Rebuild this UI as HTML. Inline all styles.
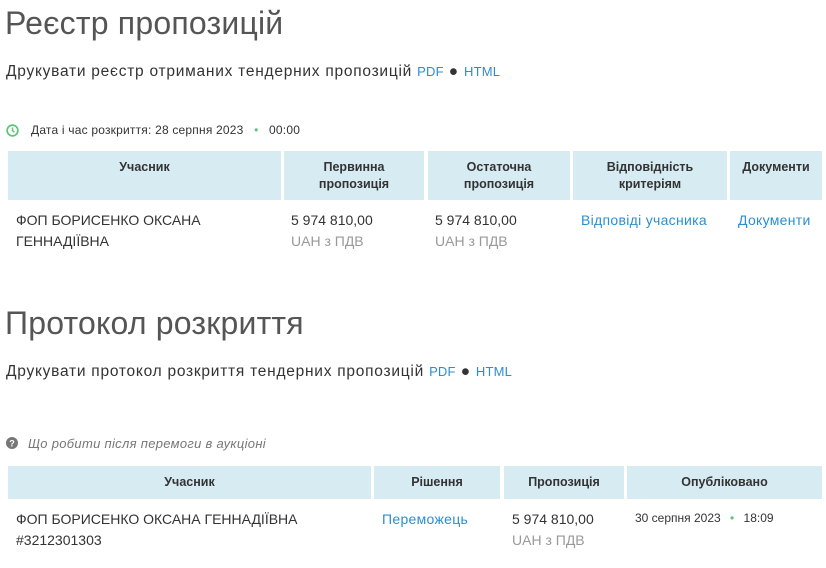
<!DOCTYPE html>
<html><head><meta charset="utf-8"><style>
body{margin:0;width:826px;height:568px;overflow:hidden;background:#fff;font-family:"Liberation Sans","DejaVu Sans",sans-serif;color:#333;}
.abs{position:absolute;}
h1{position:absolute;margin:0;font-weight:normal;font-size:32px;color:#555;left:5px;letter-spacing:0.2px}
.p{position:absolute;left:6px;font-size:15.5px;letter-spacing:0.75px;color:#333}
.p a{letter-spacing:0.2px}
a{color:#2a8fd0;text-decoration:none}
.hd{position:absolute;background:#d6ebf2;font-size:12.5px;color:#333;text-align:center;font-weight:bold;line-height:17px;box-sizing:border-box;}
.c{position:absolute;font-size:14px;line-height:21px;color:#333}
.g{color:#999}
</style></head><body>
<h1 style="top:5px">Реєстр пропозицій</h1>
<div class="p" style="top:63px">Друкувати реєстр отриманих тендерних пропозицій <a style="font-size:13px">PDF</a> ● <a style="font-size:13px">HTML</a></div>

<svg class="abs" style="left:6px;top:124px" width="13" height="13" viewBox="0 0 14 14"><circle cx="7" cy="7" r="5.8" fill="none" stroke="#5cc576" stroke-width="1.8"/><path d="M7 3.8V7l2 1.8" fill="none" stroke="#5cc576" stroke-width="1.6"/></svg>
<div class="c" style="left:31px;top:120px;font-size:12px;letter-spacing:0.2px">Дата і час розкриття: 28 серпня 2023 <span style="color:#5cc576;margin:0 7px">•</span> 00:00</div>

<div class="hd" style="left:8px;top:151px;width:273px;height:49px;padding-top:8px">Учасник</div>
<div class="hd" style="left:284px;top:151px;width:140px;height:49px;padding-top:8px">Первинна<br>пропозиція</div>
<div class="hd" style="left:428px;top:151px;width:142px;height:49px;padding-top:8px">Остаточна<br>пропозиція</div>
<div class="hd" style="left:573px;top:151px;width:154px;height:49px;padding-top:8px">Відповідність<br>критеріям</div>
<div class="hd" style="left:730px;top:151px;width:92px;height:49px;padding-top:8px">Документи</div>
<div class="c" style="left:16px;top:210px">ФОП БОРИСЕНКО ОКСАНА<br>ГЕННАДІЇВНА</div>
<div class="c" style="left:291px;top:210px">5 974 810,00<br><span class="g">UAH з ПДВ</span></div>
<div class="c" style="left:435px;top:210px">5 974 810,00<br><span class="g">UAH з ПДВ</span></div>
<div class="c" style="left:581px;top:210px;letter-spacing:0.3px"><a>Відповіді учасника</a></div>
<div class="c" style="left:738px;top:210px;letter-spacing:0.3px"><a>Документи</a></div>

<h1 style="top:305px">Протокол розкриття</h1>
<div class="p" style="top:363px">Друкувати протокол розкриття тендерних пропозицій <a style="font-size:13px">PDF</a> ● <a style="font-size:13px">HTML</a></div>

<svg class="abs" style="left:6px;top:437px" width="12" height="12" viewBox="0 0 12 12"><circle cx="6" cy="6" r="6" fill="#777"/><text x="6" y="9.5" font-size="9" font-weight="bold" fill="#fff" text-anchor="middle" font-family="Liberation Sans">?</text></svg>
<div class="c" style="left:28px;top:433px;font-size:13px;font-style:italic;color:#777;letter-spacing:0.3px">Що робити після перемоги в аукціоні</div>

<div class="hd" style="left:8px;top:466px;width:363px;height:33px;padding-top:8px">Учасник</div>
<div class="hd" style="left:374px;top:466px;width:126px;height:33px;padding-top:8px">Рішення</div>
<div class="hd" style="left:504px;top:466px;width:120px;height:33px;padding-top:8px">Пропозиція</div>
<div class="hd" style="left:627px;top:466px;width:195px;height:33px;padding-top:8px">Опубліковано</div>
<div class="c" style="left:16px;top:509px">ФОП БОРИСЕНКО ОКСАНА ГЕННАДІЇВНА<br>#3212301303</div>
<div class="c" style="left:382px;top:509px;letter-spacing:0.3px"><a>Переможець</a></div>
<div class="c" style="left:512px;top:509px">5 974 810,00<br><span class="g">UAH з ПДВ</span></div>
<div class="c" style="left:635px;top:508px;font-size:12px">30 серпня 2023 <span style="color:#5cc576;margin:0 6px">•</span> 18:09</div>
</body></html>
